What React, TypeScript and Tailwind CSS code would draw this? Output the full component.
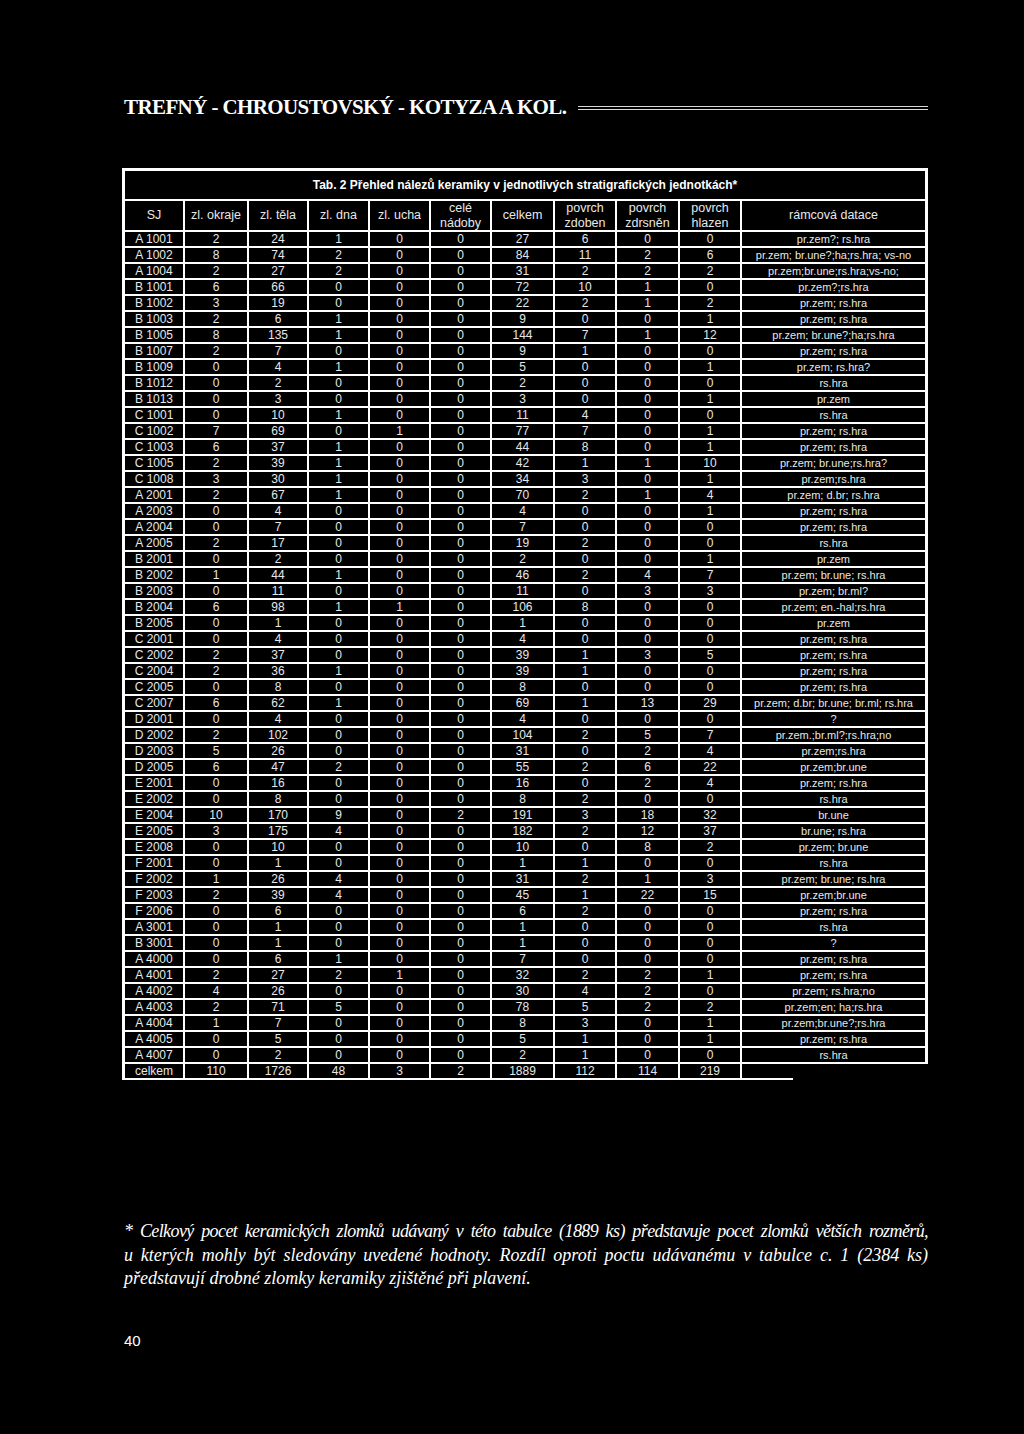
import React from "react";

type Row = [string, ...(number | string)[]];

const rows: Row[] = [
  ["A 1001", 2, 24, 1, 0, 0, 27, 6, 0, 0, "pr.zem?; rs.hra"],
  ["A 1002", 8, 74, 2, 0, 0, 84, 11, 2, 6, "pr.zem; br.une?;ha;rs.hra; vs-no"],
  ["A 1004", 2, 27, 2, 0, 0, 31, 2, 2, 2, "pr.zem;br.une;rs.hra;vs-no;"],
  ["B 1001", 6, 66, 0, 0, 0, 72, 10, 1, 0, "pr.zem?;rs.hra"],
  ["B 1002", 3, 19, 0, 0, 0, 22, 2, 1, 2, "pr.zem; rs.hra"],
  ["B 1003", 2, 6, 1, 0, 0, 9, 0, 0, 1, "pr.zem; rs.hra"],
  ["B 1005", 8, 135, 1, 0, 0, 144, 7, 1, 12, "pr.zem; br.une?;ha;rs.hra"],
  ["B 1007", 2, 7, 0, 0, 0, 9, 1, 0, 0, "pr.zem; rs.hra"],
  ["B 1009", 0, 4, 1, 0, 0, 5, 0, 0, 1, "pr.zem; rs.hra?"],
  ["B 1012", 0, 2, 0, 0, 0, 2, 0, 0, 0, "rs.hra"],
  ["B 1013", 0, 3, 0, 0, 0, 3, 0, 0, 1, "pr.zem"],
  ["C 1001", 0, 10, 1, 0, 0, 11, 4, 0, 0, "rs.hra"],
  ["C 1002", 7, 69, 0, 1, 0, 77, 7, 0, 1, "pr.zem; rs.hra"],
  ["C 1003", 6, 37, 1, 0, 0, 44, 8, 0, 1, "pr.zem; rs.hra"],
  ["C 1005", 2, 39, 1, 0, 0, 42, 1, 1, 10, "pr.zem; br.une;rs.hra?"],
  ["C 1008", 3, 30, 1, 0, 0, 34, 3, 0, 1, "pr.zem;rs.hra"],
  ["A 2001", 2, 67, 1, 0, 0, 70, 2, 1, 4, "pr.zem; d.br; rs.hra"],
  ["A 2003", 0, 4, 0, 0, 0, 4, 0, 0, 1, "pr.zem; rs.hra"],
  ["A 2004", 0, 7, 0, 0, 0, 7, 0, 0, 0, "pr.zem; rs.hra"],
  ["A 2005", 2, 17, 0, 0, 0, 19, 2, 0, 0, "rs.hra"],
  ["B 2001", 0, 2, 0, 0, 0, 2, 0, 0, 1, "pr.zem"],
  ["B 2002", 1, 44, 1, 0, 0, 46, 2, 4, 7, "pr.zem; br.une; rs.hra"],
  ["B 2003", 0, 11, 0, 0, 0, 11, 0, 3, 3, "pr.zem; br.ml?"],
  ["B 2004", 6, 98, 1, 1, 0, 106, 8, 0, 0, "pr.zem; en.-hal;rs.hra"],
  ["B 2005", 0, 1, 0, 0, 0, 1, 0, 0, 0, "pr.zem"],
  ["C 2001", 0, 4, 0, 0, 0, 4, 0, 0, 0, "pr.zem; rs.hra"],
  ["C 2002", 2, 37, 0, 0, 0, 39, 1, 3, 5, "pr.zem; rs.hra"],
  ["C 2004", 2, 36, 1, 0, 0, 39, 1, 0, 0, "pr.zem; rs.hra"],
  ["C 2005", 0, 8, 0, 0, 0, 8, 0, 0, 0, "pr.zem; rs.hra"],
  ["C 2007", 6, 62, 1, 0, 0, 69, 1, 13, 29, "pr.zem; d.br; br.une; br.ml; rs.hra"],
  ["D 2001", 0, 4, 0, 0, 0, 4, 0, 0, 0, "?"],
  ["D 2002", 2, 102, 0, 0, 0, 104, 2, 5, 7, "pr.zem.;br.ml?;rs.hra;no"],
  ["D 2003", 5, 26, 0, 0, 0, 31, 0, 2, 4, "pr.zem;rs.hra"],
  ["D 2005", 6, 47, 2, 0, 0, 55, 2, 6, 22, "pr.zem;br.une"],
  ["E 2001", 0, 16, 0, 0, 0, 16, 0, 2, 4, "pr.zem; rs.hra"],
  ["E 2002", 0, 8, 0, 0, 0, 8, 2, 0, 0, "rs.hra"],
  ["E 2004", 10, 170, 9, 0, 2, 191, 3, 18, 32, "br.une"],
  ["E 2005", 3, 175, 4, 0, 0, 182, 2, 12, 37, "br.une; rs.hra"],
  ["E 2008", 0, 10, 0, 0, 0, 10, 0, 8, 2, "pr.zem; br.une"],
  ["F 2001", 0, 1, 0, 0, 0, 1, 1, 0, 0, "rs.hra"],
  ["F 2002", 1, 26, 4, 0, 0, 31, 2, 1, 3, "pr.zem; br.une; rs.hra"],
  ["F 2003", 2, 39, 4, 0, 0, 45, 1, 22, 15, "pr.zem;br.une"],
  ["F 2006", 0, 6, 0, 0, 0, 6, 2, 0, 0, "pr.zem; rs.hra"],
  ["A 3001", 0, 1, 0, 0, 0, 1, 0, 0, 0, "rs.hra"],
  ["B 3001", 0, 1, 0, 0, 0, 1, 0, 0, 0, "?"],
  ["A 4000", 0, 6, 1, 0, 0, 7, 0, 0, 0, "pr.zem; rs.hra"],
  ["A 4001", 2, 27, 2, 1, 0, 32, 2, 2, 1, "pr.zem; rs.hra"],
  ["A 4002", 4, 26, 0, 0, 0, 30, 4, 2, 0, "pr.zem; rs.hra;no"],
  ["A 4003", 2, 71, 5, 0, 0, 78, 5, 2, 2, "pr.zem;en; ha;rs.hra"],
  ["A 4004", 1, 7, 0, 0, 0, 8, 3, 0, 1, "pr.zem;br.une?;rs.hra"],
  ["A 4005", 0, 5, 0, 0, 0, 5, 1, 0, 1, "pr.zem; rs.hra"],
  ["A 4007", 0, 2, 0, 0, 0, 2, 1, 0, 0, "rs.hra"],
];

const totals = ["celkem", 110, 1726, 48, 3, 2, 1889, 112, 114, 219];

const headers = [
  ["SJ"],
  ["zl. okraje"],
  ["zl. těla"],
  ["zl. dna"],
  ["zl. ucha"],
  ["celé", "nádoby"],
  ["celkem"],
  ["povrch", "zdoben"],
  ["povrch", "zdrsněn"],
  ["povrch", "hlazen"],
  ["rámcová datace"],
];

const note1 =
  "* Celkový pocet keramických zlomků udávaný v této tabulce (1889 ks) představuje pocet zlomků větších rozměrů,";
const note2 =
  "u kterých mohly být sledovány uvedené hodnoty. Rozdíl oproti poctu udávanému v tabulce c. 1 (2384 ks)";

// 11 sloupců, mezery 2px
const grid =
  "grid grid-cols-[58px_62px_58px_59px_59px_59px_61px_60px_61px_60px_183px] gap-[2px]";

export default function App() {
  return (
    <div className="w-[1024px] h-[1434px] bg-black text-[#e8e8e8] relative overflow-hidden">
      {/* hlavička stránky */}
      <div className="flex items-center pt-[97px] pl-[124px] pr-[96px]">
        <div
          className="text-[21px] font-bold leading-none whitespace-nowrap text-white tracking-[-0.6px] w-[440px]"
          style={{ fontFamily: '"Liberation Serif", "Times New Roman", serif' }}
        >
          TREFNÝ - CHROUSTOVSKÝ - KOTYZA A KOL.
        </div>
        <div className="flex-1 ml-[14px] h-[4px] border-t border-b border-[#d8d8d8]"></div>
      </div>

      {/* tabulka */}
      <div
        className="absolute left-[122px] top-[168px] w-[806px]"
        style={{ fontFamily: '"Liberation Sans", Arial, sans-serif' }}
      >
        <div className="bg-white px-[3px] pt-[3px] flex flex-col gap-[2px]">
          <div className="bg-black h-[28px] flex items-center justify-center text-[12px] font-bold text-white">
            Tab. 2 Přehled nálezů keramiky v jednotlivých stratigrafických jednotkách*
          </div>
          <div className={grid}>
            {headers.map((h, i) => (
              <div
                key={i}
                className="bg-black h-[29px] flex flex-col items-center justify-center text-[12.5px] leading-[15px]"
              >
                {h.map((t) => (
                  <span key={t}>{t}</span>
                ))}
              </div>
            ))}
          </div>
          {rows.map((r) => (
            <div key={r[0]} className={grid}>
              {r.map((c, i) => (
                <div
                  key={i}
                  className={
                    i === 10
                      ? "bg-black h-[14px] flex items-center justify-center text-[11px] leading-none whitespace-nowrap"
                      : "bg-black h-[14px] flex items-center justify-center text-[12px] leading-none whitespace-nowrap"
                  }
                >
                  {c}
                </div>
              ))}
            </div>
          ))}
          <div className={grid}>
            {totals.map((c, i) => (
              <div
                key={i}
                className="bg-black h-[14px] flex items-center justify-center text-[12px] leading-none"
              >
                {c}
              </div>
            ))}
            <div className="bg-black h-[14px] mr-[-3px]"></div>
          </div>
        </div>
        <div className="w-[671px] h-[2px] bg-white"></div>
      </div>

      {/* poznámka */}
      <div
        className="absolute left-[124px] top-[1220px] w-[804px] text-[18px] italic leading-[23.5px] text-white"
        style={{ fontFamily: '"Liberation Serif", "Times New Roman", serif' }}
      >
        <div className="flex justify-between whitespace-nowrap tracking-[-0.6px]">
          {note1.split(" ").map((w, i) => (
            <span key={i}>{w}</span>
          ))}
        </div>
        <div className="flex justify-between whitespace-nowrap">
          {note2.split(" ").map((w, i) => (
            <span key={i}>{w}</span>
          ))}
        </div>
        <div>představují drobné zlomky keramiky zjištěné při plavení.</div>
      </div>

      <div
        className="absolute left-[124px] top-[1330px] text-[15px] text-white"
        style={{ fontFamily: '"Liberation Sans", Arial, sans-serif' }}
      >
        40
      </div>
    </div>
  );
}
